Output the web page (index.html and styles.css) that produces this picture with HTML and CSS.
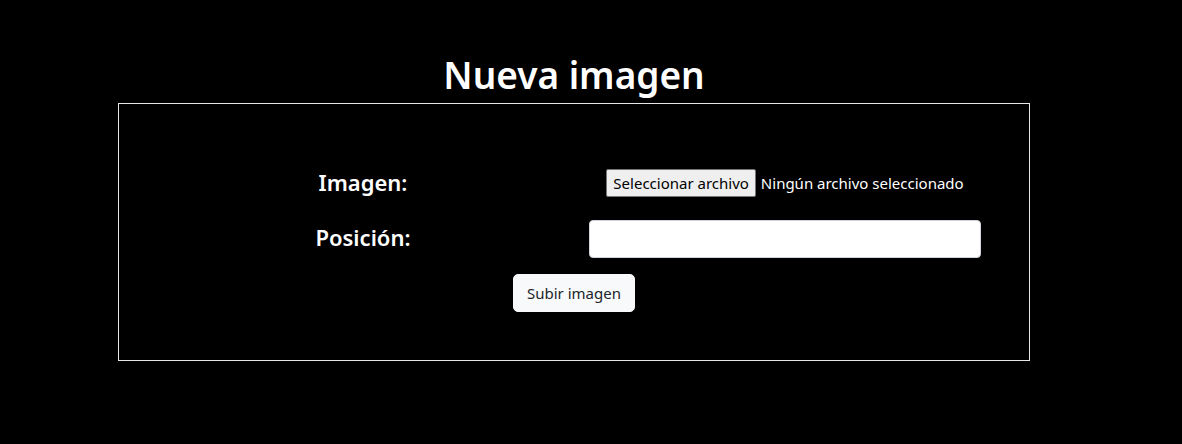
FILE: index.html
```html
<!DOCTYPE html>
<html lang="es">
<head>
<meta charset="utf-8">
<title>Nueva imagen</title>
<link rel="stylesheet" href="styles.css">
</head>
<body>
<main class="page">
  <h1 class="title">Nueva imagen</h1>
  <form class="card">
    <div class="grid">
      <label class="label label-img">Imagen:</label>
      <div class="field">
        <div class="file">
          <span class="file-btn">Seleccionar archivo</span>
          <span class="file-name">Ningún archivo seleccionado</span>
        </div>
      </div>
      <label class="label label-pos">Posición:</label>
      <div class="field">
        <input class="text-input" type="text">
      </div>
    </div>
    <div class="actions">
      <button class="submit" type="button">Subir imagen</button>
    </div>
  </form>
</main>
</body>
</html>
```
FILE: styles.css
```css
html, body {
  margin: 0;
  background: #000;
  color: #fff;
  font-family: "Noto Sans", "DejaVu Sans", sans-serif;
}
.page {
  margin-left: 118px;
  width: 912px;
  padding-top: 52px;
}
.title {
  margin: 0 0 5px;
  text-align: center;
  font-size: 37px;
  line-height: 46px;
  font-weight: 600;
}
.card {
  border: 1px solid #e6e6e6;
  padding: 65px 33px 48px;
}
.grid {
  display: grid;
  grid-template-columns: 1fr 1fr;
  row-gap: 23px;
  align-items: center;
}
.label {
  text-align: center;
  font-size: 22px;
  line-height: 26px;
  font-weight: 600;
}
.label-img {
  margin-top: -2px;
}
.label-pos {
  margin-top: -4px;
}
.field {
  display: flex;
  justify-content: center;
}
.file {
  display: flex;
  align-items: center;
  gap: 5px;
  font-size: 15px;
}
.file-btn {
  display: inline-block;
  height: 28px;
  box-sizing: border-box;
  line-height: 26px;
  padding: 0 6px;
  background: #efefef;
  color: #000;
  border: 1px solid #767676;
  border-radius: 2px;
}
.text-input {
  width: 392px;
  height: 38px;
  box-sizing: border-box;
  border: 1px solid #ced4da;
  border-radius: 4px;
  background: #fff;
  margin: 0;
}
.actions {
  display: flex;
  justify-content: center;
  margin-top: 16px;
}
.submit {
  font-family: inherit;
  font-size: 15px;
  height: 38px;
  padding: 0 13px;
  background: #f8f9fa;
  color: #212529;
  border: 1px solid #f8f9fa;
  border-radius: 5px;
}
```
